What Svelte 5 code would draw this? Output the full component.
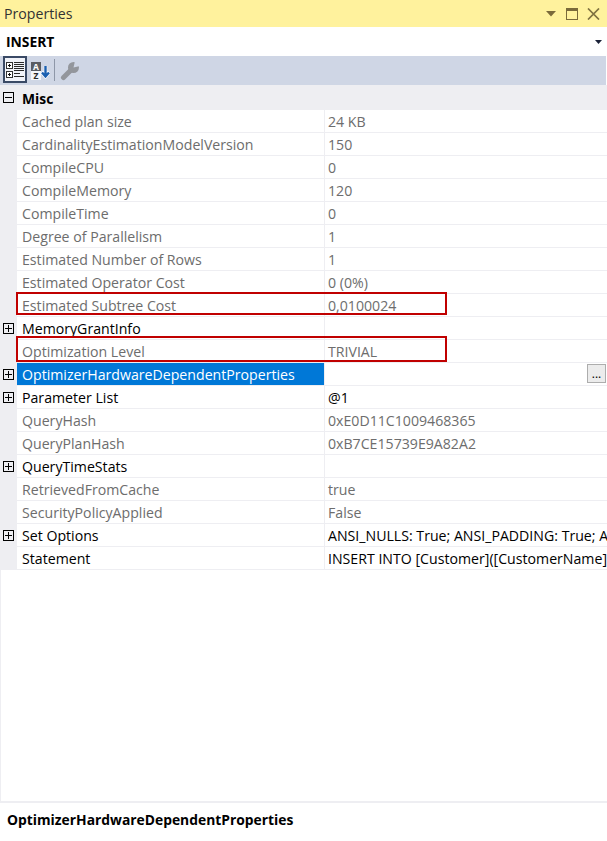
<script>
    // property rows, in the order the panel lists them
    const rows = [
        { name: 'Cached plan size', value: '24 KB', dim: true },
        { name: 'CardinalityEstimationModelVersion', value: '150', dim: true },
        { name: 'CompileCPU', value: '0', dim: true },
        { name: 'CompileMemory', value: '120', dim: true },
        { name: 'CompileTime', value: '0', dim: true },
        { name: 'Degree of Parallelism', value: '1', dim: true },
        { name: 'Estimated Number of Rows', value: '1', dim: true },
        { name: 'Estimated Operator Cost', value: '0 (0%)', dim: true },
        { name: 'Estimated Subtree Cost', value: '0,0100024', dim: true, mark: 'mark-a' },
        { name: 'MemoryGrantInfo', value: '', plus: true },
        { name: 'Optimization Level', value: 'TRIVIAL', dim: true, mark: 'mark-b' },
        { name: 'OptimizerHardwareDependentProperties', value: '', plus: true, selected: true },
        { name: 'Parameter List', value: '@1', plus: true },
        { name: 'QueryHash', value: '0xE0D11C1009468365', dim: true },
        { name: 'QueryPlanHash', value: '0xB7CE15739E9A82A2', dim: true },
        { name: 'QueryTimeStats', value: '', plus: true },
        { name: 'RetrievedFromCache', value: 'true', dim: true },
        { name: 'SecurityPolicyApplied', value: 'False', dim: true },
        { name: 'Set Options', value: 'ANSI_NULLS: True; ANSI_PADDING: True; ANSI_WARNINGS: True', plus: true },
        { name: 'Statement', value: 'INSERT INTO [Customer]([CustomerName],[Address]) VALUES(@1,@2)' }
    ];
</script>

<div class="panel">
    <header class="title">
        <span>Properties</span>
        <div class="title-icons">
            <svg width="12" height="8" viewBox="0 0 12 8"><path d="M1 1h10L6 6.500z" fill="#7a6a3a" /></svg>
            <svg width="12" height="12" viewBox="0 0 12 12"><rect x="0.500" y="0.500" width="11" height="11" fill="none" stroke="#7a6a3a" /><rect x="0" y="0" width="12" height="3" fill="#7a6a3a" /></svg>
            <svg width="13" height="12" viewBox="0 0 13 12"><path d="M1 .5l11 11M12 .5L1 11.500" stroke="#7f7140" stroke-width="1.700" fill="none" /></svg>
        </div>
    </header>

    <div class="object">
        <span>INSERT</span>
        <svg width="8" height="4" viewBox="0 0 8 4"><path d="M0 0h7L3.500 4z" fill="#1b2238" /></svg>
    </div>

    <div class="toolbar">
        <div class="tool active">
            <svg width="18" height="16" viewBox="0 0 18 16">
                <rect x="0.500" y="0.500" width="6" height="6" fill="#fff" stroke="#333" />
                <rect x="0.500" y="9.500" width="6" height="6" fill="#fff" stroke="#333" />
                <path d="M2 3.500h3M2 12.500h3M3.500 2v3M3.500 11v3" stroke="#111" />
                <path d="M8 .5h10M8 2.500h10M8 4.500h10M8 6.500h10M8 8.500h10M8 11.500h6M8 14.500h10" stroke="#2a2a2a" />
            </svg>
        </div>
        <div class="tool sort">
            <svg width="20" height="20" viewBox="0 0 20 20">
                <rect x="1" y="2" width="10" height="9" fill="#5a5d63" />
                <rect x="1" y="11" width="10" height="9" fill="#f4f6fa" />
                <text x="6" y="9.500" class="az">A</text>
                <text x="6" y="19" class="az z">Z</text>
                <path d="M15.500 6v10M11.500 12l4 4.500 4-4.500" stroke="#fff" stroke-width="3.500" fill="none" />
                <path d="M15.500 6v10M12 12.500l3.500 4 3.500-4" stroke="#1a5fb0" stroke-width="2.400" fill="none" />
            </svg>
        </div>
        <div class="sep"></div>
        <div class="tool wrench">
            <svg width="20" height="20" viewBox="0 0 20 20">
                <path d="M3.500 16.500L11 9" stroke="#93969c" stroke-width="5" stroke-linecap="round" fill="none" />
                <circle cx="13.500" cy="6.500" r="5.500" fill="#93969c" />
                <path d="M13.500 6.500L15 0h5.500v5z" fill="#cfd6e5" />
            </svg>
        </div>
    </div>

    <div class="grid">
        <div class="row category">
            <div class="gutter"><span class="box minus"></span></div>
            <div class="cat-name">Misc</div>
        </div>
        {#each rows as row}
            <div class="row" class:dim={row.dim}>
                <div class="gutter">
                    {#if row.plus}<span class="box plus"></span>{/if}
                </div>
                <div class="name" class:selected={row.selected}>{row.name}</div>
                <div class="value">
                    <span>{row.value}</span>
                    {#if row.selected}<div class="dots">...</div>{/if}
                </div>
                {#if row.mark}<div class="mark {row.mark}"></div>{/if}
            </div>
        {/each}
    </div>

    <div class="empty"></div>

    <footer class="description">OptimizerHardwareDependentProperties</footer>
</div>

<style>
    :global(body) {
        margin: 0;
        background: #fff;
    }

    .panel {
        width: 607px;
        height: 841px;
        display: flex;
        flex-direction: column;
        font-family: "Open Sans", "Noto Sans", sans-serif;
        font-size: 14.15px;
        color: #000;
        overflow: hidden;
    }

    .title {
        height: 27px;
        flex: none;
        display: flex;
        align-items: center;
        justify-content: space-between;
        padding: 0 7px 0 4px;
        background: #fff29d;
        color: #333;
    }

    .title-icons {
        display: flex;
        align-items: center;
        gap: 9px;
    }

    .object {
        height: 29px;
        flex: none;
        display: flex;
        align-items: center;
        justify-content: space-between;
        padding: 0 4px 0 6px;
        font-size: 13.85px;
        font-weight: 700;
    }

    .toolbar {
        height: 29px;
        width: 606px;
        flex: none;
        display: flex;
        align-items: flex-start;
        padding-left: 3px;
        box-sizing: border-box;
        background: #cfd6e5;
    }

    .tool {
        width: 24px;
        height: 27px;
        display: flex;
        align-items: center;
        justify-content: center;
        box-sizing: border-box;
    }

    .tool.active {
        background: #f1f3f9;
        border: 2px solid #3a4a66;
    }

    .tool.sort {
        margin-left: 1px;
    }

    .tool.wrench {
        padding-top: 2px;
    }

    .az {
        font-size: 8.500px;
        font-weight: 700;
        fill: #fff;
        text-anchor: middle;
    }

    .az.z {
        fill: #2a2a2a;
    }

    .sep {
        width: 1px;
        height: 22px;
        background: #8e97a8;
        margin: 3px 3px 0 2px;
    }

    .grid {
        flex: none;
    }

    .row {
        position: relative;
        height: 23px;
        display: flex;
    }

    .gutter {
        width: 17px;
        flex: none;
        background: #eeeef2;
        display: flex;
        align-items: center;
        justify-content: center;
    }

    .box {
        width: 9px;
        height: 9px;
        border: 1px solid #000;
        margin-right: 1px;
        background: linear-gradient(#000, #000) center / 7px 1px no-repeat;
    }

    .box.plus {
        background:
            linear-gradient(#000, #000) center / 7px 1px no-repeat,
            linear-gradient(#000, #000) center / 1px 7px no-repeat;
    }

    .category {
        height: 25px;
        background: #eeeef2;
    }

    .cat-name {
        padding-left: 5px;
        line-height: 27px;
        font-size: 13.85px;
        font-weight: 700;
    }

    .name {
        width: 307px;
        flex: none;
        box-sizing: border-box;
        padding-left: 5px;
        line-height: 24px;
        border-bottom: 1px solid #eeeef2;
        white-space: nowrap;
        overflow: hidden;
    }

    .value {
        flex: 1;
        min-width: 0;
        position: relative;
        padding-left: 3px;
        line-height: 24px;
        border-left: 1px solid #eeeef2;
        border-bottom: 1px solid #eeeef2;
        white-space: nowrap;
        overflow: hidden;
    }

    .dim .name,
    .dim .value {
        color: #6d6d6d;
    }

    .name.selected {
        background: #0078d7;
        color: #fff;
    }

    .dots {
        position: absolute;
        top: 1px;
        right: 1px;
        width: 19px;
        height: 19px;
        box-sizing: border-box;
        background: #ececec;
        border: 1px solid #adadad;
        font-size: 12px;
        line-height: 17px;
        text-align: center;
        color: #000;
    }

    .mark {
        position: absolute;
        left: 16px;
        width: 431px;
        box-sizing: border-box;
        border: 2px solid #c00000;
        pointer-events: none;
    }

    .mark-a {
        top: -2px;
        height: 23px;
    }

    .mark-b {
        top: -4px;
        height: 26px;
    }

    .empty {
        flex: 1;
        border-left: 1px solid #eeeef2;
        border-bottom: 2px solid #eeeef2;
    }

    .description {
        height: 38px;
        flex: none;
        box-sizing: border-box;
        padding-left: 7px;
        padding-top: 7px;
        font-size: 13.85px;
        font-weight: 700;
    }
</style>
